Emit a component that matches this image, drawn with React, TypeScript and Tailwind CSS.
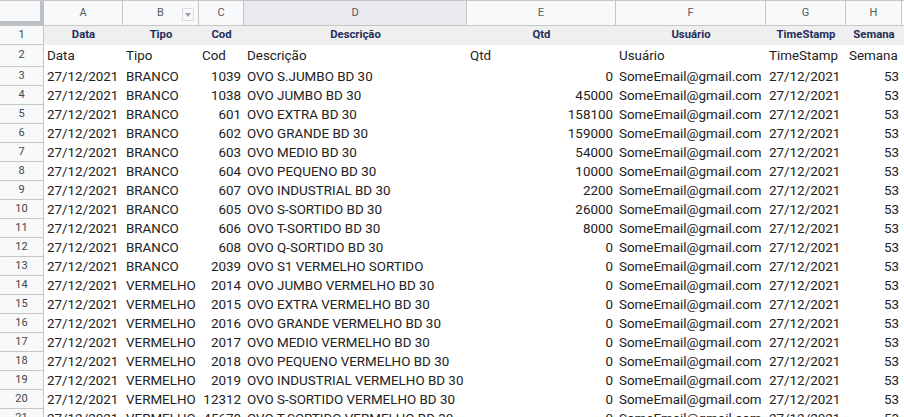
import React from 'react'

type Col = {
  key: string
  letter: string
  title: string
  width: string
  align: 'left' | 'right'
}

const columns: Col[] = [
  { key: 'data', letter: 'A', title: 'Data', width: 'w-[79px]', align: 'left' },
  { key: 'tipo', letter: 'B', title: 'Tipo', width: 'w-[76px]', align: 'left' },
  { key: 'cod', letter: 'C', title: 'Cod', width: 'w-[45px]', align: 'right' },
  { key: 'desc', letter: 'D', title: 'Descrição', width: 'w-[223px]', align: 'left' },
  { key: 'qtd', letter: 'E', title: 'Qtd', width: 'w-[149px]', align: 'right' },
  { key: 'user', letter: 'F', title: 'Usuário', width: 'w-[150px]', align: 'left' },
  { key: 'ts', letter: 'G', title: 'TimeStamp', width: 'w-[80px]', align: 'left' },
  { key: 'week', letter: 'H', title: 'Semana', width: 'w-[56px]', align: 'right' },
]

const produtos: [string, string, string, string][] = [
  ['BRANCO', '1039', 'OVO S.JUMBO BD 30', '0'],
  ['BRANCO', '1038', 'OVO JUMBO BD 30', '45000'],
  ['BRANCO', '601', 'OVO EXTRA BD 30', '158100'],
  ['BRANCO', '602', 'OVO GRANDE BD 30', '159000'],
  ['BRANCO', '603', 'OVO MEDIO BD 30', '54000'],
  ['BRANCO', '604', 'OVO PEQUENO BD 30', '10000'],
  ['BRANCO', '607', 'OVO INDUSTRIAL BD 30', '2200'],
  ['BRANCO', '605', 'OVO S-SORTIDO BD 30', '26000'],
  ['BRANCO', '606', 'OVO T-SORTIDO BD 30', '8000'],
  ['BRANCO', '608', 'OVO Q-SORTIDO BD 30', '0'],
  ['BRANCO', '2039', 'OVO S1 VERMELHO SORTIDO', '0'],
  ['VERMELHO', '2014', 'OVO JUMBO VERMELHO BD 30', '0'],
  ['VERMELHO', '2015', 'OVO EXTRA VERMELHO BD 30', '0'],
  ['VERMELHO', '2016', 'OVO GRANDE VERMELHO BD 30', '0'],
  ['VERMELHO', '2017', 'OVO MEDIO VERMELHO BD 30', '0'],
  ['VERMELHO', '2018', 'OVO PEQUENO VERMELHO BD 30', '0'],
  ['VERMELHO', '2019', 'OVO INDUSTRIAL VERMELHO BD 30', '0'],
  ['VERMELHO', '12312', 'OVO S-SORTIDO VERMELHO BD 30', '0'],
  ['VERMELHO', '45678', 'OVO T-SORTIDO VERMELHO BD 30', '0'],
]

function FilterButton() {
  return (
    <span className="absolute right-[4px] top-[7px] flex h-[13px] w-[12px] items-center justify-center border border-[#dadce0] bg-[#f8f9fa]">
      <span className="h-0 w-0 border-x-[3.5px] border-t-[4px] border-x-transparent border-t-[#9aa0a6]" />
    </span>
  )
}

function RowNumber({ n, height }: { n: number; height: string }) {
  return (
    <div className={`flex w-[44px] shrink-0 items-center justify-center border-b border-r border-[#c4c7c5] bg-[#f8f9fa] text-[11px] text-[#444746] ${height}`}>
      {n}
    </div>
  )
}

function Cell({ col, children }: { col: Col; children: React.ReactNode }) {
  return (
    <div
      className={`${col.width} shrink-0 overflow-visible whitespace-nowrap px-[3px] pt-px ${col.align === 'right' ? 'text-right' : 'text-left'}`}
    >
      {children}
    </div>
  )
}

export default function App() {
  return (
    <div className="h-[417px] w-[904px] overflow-hidden bg-white font-['Roboto',sans-serif] text-[13.4px] text-[#222]">
      {/* column letters */}
      <div className="flex h-[26px] border-b border-t border-[#c4c7c5]">
        <div className="flex w-[44px] shrink-0">
          <div className="flex w-[40px] flex-col">
            <div className="flex-1 bg-[#f8f9fa]" />
            <div className="h-[4px] bg-[#bdc1c6]" />
          </div>
          <div className="w-[4px] bg-[#bdc1c6]" />
        </div>
        {columns.map((col) => (
          <div
            key={col.key}
            className={`relative flex ${col.width} shrink-0 items-center justify-center border-r border-[#c4c7c5] text-[11px] text-[#575a5e] ${col.letter === 'D' ? 'bg-[#e8eaed]' : 'bg-[#f8f9fa]'}`}
          >
            {col.letter}
            {col.letter === 'B' && <FilterButton />}
          </div>
        ))}
      </div>

      {/* row 1: styled titles */}
      <div className="flex h-[19px]">
        <RowNumber n={1} height="h-[19px]" />
        <div className="flex flex-1 items-center bg-[#efefef] text-[11.3px] font-bold text-[#1f2d5c]">
          {columns.map((col) => (
            <div key={col.key} className={`${col.width} shrink-0 whitespace-nowrap text-center`}>
              {col.title}
            </div>
          ))}
        </div>
      </div>

      {/* row 2: raw titles */}
      <div className="flex h-[22px] items-center">
        <RowNumber n={2} height="h-[22px]" />
        {columns.map((col) => (
          <Cell key={col.key} col={{ ...col, align: 'left' }}>
            {col.title}
          </Cell>
        ))}
      </div>

      {produtos.map(([tipo, cod, desc, qtd], i) => {
        const values = [
          '27/12/2021',
          tipo,
          cod,
          desc,
          qtd,
          'SomeEmail@gmail.com',
          '27/12/2021',
          '53',
        ]
        return (
          <div key={i} className="flex h-[19px] items-center">
            <RowNumber n={i + 3} height="h-[19px]" />
            {columns.map((col, c) => (
              <Cell key={col.key} col={col}>
                {values[c]}
              </Cell>
            ))}
          </div>
        )
      })}
    </div>
  )
}
